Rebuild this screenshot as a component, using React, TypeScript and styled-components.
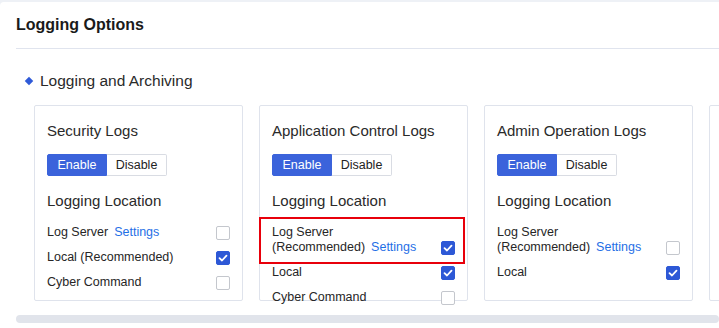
import React from 'react';
import styled, { createGlobalStyle, css } from 'styled-components';

interface LogRow {
    label: string
    note?: string
    settings?: boolean
    checked?: boolean
    highlight?: boolean
}

interface LogCard {
    title: string
    enabled: boolean
    rows: LogRow[]
}

const cards: LogCard[] = [
    {
        title: 'Security Logs',
        enabled: true,
        rows: [
            { label: 'Log Server', settings: true },
            { label: 'Local (Recommended)', checked: true },
            { label: 'Cyber Command' },
        ],
    },
    {
        title: 'Application Control Logs',
        enabled: true,
        rows: [
            { label: 'Log Server', note: '(Recommended)', settings: true, checked: true, highlight: true },
            { label: 'Local', checked: true },
            { label: 'Cyber Command' },
        ],
    },
    {
        title: 'Admin Operation Logs',
        enabled: true,
        rows: [
            { label: 'Log Server', note: '(Recommended)', settings: true },
            { label: 'Local', checked: true },
        ],
    },
]

const GlobalStyle = createGlobalStyle`
    html, body {
        margin: 0;
        padding: 0;
        background: #eef1f6;
        overflow: hidden;
    }
    body {
        font-family: "Liberation Sans", Arial, sans-serif;
        color: #262626;
    }
`

const Panel = styled.div`
    margin-top: 2px;
    height: 326px;
    background: #fff;
    border-radius: 4px 0 0 0;
`

const PanelHeader = styled.h1`
    margin: 0 0 0 16px;
    height: 46px;
    display: flex;
    align-items: center;
    font-size: 16px;
    font-weight: 700;
    color: #1a1a1a;
    border-bottom: 1px solid #e0e4ee;
`

const SectionHeading = styled.h2`
    margin: 22px 0 0 0;
    height: 20px;
    display: flex;
    align-items: center;
    font-size: 15.5px;
    font-weight: 400;
    color: #2a2a2a;
`

const Diamond = styled.span`
    width: 6px;
    height: 6px;
    margin: 0 8.5px 0 25.5px;
    background: #2f5ad8;
    transform: rotate(45deg);
`

const CardsRow = styled.div`
    margin-top: 14px;
    padding-left: 34px;
    display: flex;
    gap: 16px;
`

const Card = styled.section`
    flex: 0 0 209px;
    height: 196px;
    box-sizing: border-box;
    padding: 15px 12px 0 12px;
    border: 1px solid #dfe3ec;
    border-radius: 2px;
`

const CardTitle = styled.div`
    font-size: 15px;
    line-height: 20px;
    color: #2a2a2a;
    white-space: nowrap;
`

const Toggle = styled.div`
    margin-top: 13px;
    display: flex;
    height: 22px;
`

const ToggleButton = styled.button<{ $active: boolean }>`
    width: 60px;
    height: 22px;
    box-sizing: border-box;
    padding: 0;
    font-family: inherit;
    font-size: 12.5px;
    cursor: pointer;
    border: 1px solid #d9dce3;
    background: #fff;
    color: #222;

    &:first-child {
        border-radius: 2px 0 0 2px;
    }
    &:last-child {
        border-radius: 0 2px 2px 0;
        border-left: none;
    }

    ${props => props.$active && css`
        background: #3b63db;
        border-color: #3b63db;
        color: #fff;
    `}
`

const LocationTitle = styled.div`
    margin-top: 15px;
    font-size: 15px;
    line-height: 20px;
    color: #2a2a2a;
`

const RowList = styled.div`
    margin-top: 14px;
    display: flex;
    flex-direction: column;
    gap: 10px;
`

const Row = styled.div`
    position: relative;
    display: flex;
    align-items: flex-end;
    justify-content: space-between;
    font-size: 12.5px;
    line-height: 15px;
    color: #262626;
`

const SettingsLink = styled.a`
    margin-left: 6px;
    color: #1f6fe6;
    text-decoration: none;
    cursor: pointer;
`

const Checkbox = styled.span<{ $checked: boolean }>`
    flex: 0 0 14px;
    width: 14px;
    height: 14px;
    box-sizing: border-box;
    border-radius: 2px;
    display: flex;
    align-items: center;
    justify-content: center;
    border: 1px solid #c4c7cd;
    background: #fff;

    ${props => props.$checked && css`
        border-color: #2d58d6;
        background: #2d58d6;
    `}
`

const Highlight = styled.span`
    position: absolute;
    top: -8px;
    bottom: -9px;
    left: -13px;
    right: -10px;
    border: 2px solid #e8000b;
    pointer-events: none;
`

const ScrollThumb = styled.div`
    margin: 14px 0 0 16px;
    height: 8px;
    border-radius: 4px;
    background: #e1e4eb;
`

const CheckMark = () => (
    <svg width="10" height="10" viewBox="0 0 10 10">
        <polyline points="1.5,5.2 4,7.5 8.5,2.6" fill="none" stroke="#fff" strokeWidth="1.8" strokeLinecap="round" strokeLinejoin="round" />
    </svg>
)

const App = () => {
    return (
        <>
            <GlobalStyle />
            <Panel>
                <PanelHeader>Logging Options</PanelHeader>
                <SectionHeading>
                    <Diamond />
                    Logging and Archiving
                </SectionHeading>
                <CardsRow>
                    {cards.map((card) => (
                        <Card key={card.title}>
                            <CardTitle>{card.title}</CardTitle>
                            <Toggle>
                                <ToggleButton $active={card.enabled}>Enable</ToggleButton>
                                <ToggleButton $active={!card.enabled}>Disable</ToggleButton>
                            </Toggle>
                            <LocationTitle>Logging Location</LocationTitle>
                            <RowList>
                                {card.rows.map((row) => (
                                    <Row key={row.label}>
                                        <span>
                                            {row.label}
                                            {row.note && <><br />{row.note}</>}
                                            {row.settings && <SettingsLink>Settings</SettingsLink>}
                                        </span>
                                        <Checkbox $checked={!!row.checked}>
                                            {row.checked && <CheckMark />}
                                        </Checkbox>
                                        {row.highlight && <Highlight />}
                                    </Row>
                                ))}
                            </RowList>
                        </Card>
                    ))}
                    {/* next card, scrolled out of view */}
                    <Card />
                </CardsRow>
                <ScrollThumb />
            </Panel>
        </>
    )
}

export default App
